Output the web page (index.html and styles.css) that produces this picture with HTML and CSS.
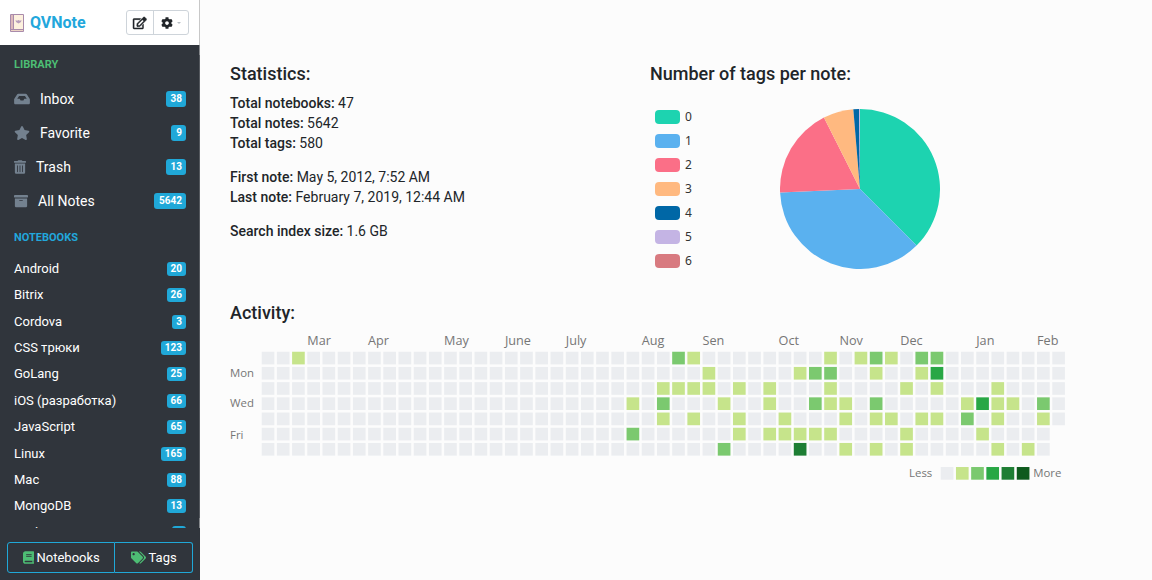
FILE: index.html
```html
<!DOCTYPE html>
<html lang="en">
<head>
<meta charset="utf-8">
<title>QVNote</title>
<link rel="stylesheet" href="styles.css">
</head>
<body>
<div class="app">
  <aside class="sidebar">
    <header class="brand-bar">
      <svg class="logo" viewBox="0 0 14 18" aria-hidden="true">
        <rect x="0" y="0" width="14" height="18" rx="1" fill="#a98bab"/>
        <rect x="4" y="1" width="9" height="14" fill="#fdf1de"/>
        <rect x="1" y="1" width="2" height="14" fill="#dcb9bb"/>
        <rect x="1" y="16" width="12" height="1" fill="#ecd3c4"/>
        <path d="M5.500 6l1.500.8L8.500 6l1.500.8L11.500 6 11 8 8.500 9.500 6 8z" fill="#b79dbb"/>
      </svg>
      <a class="brand" href="#">QVNote</a>
      <div class="tools">
        <button class="tool" type="button" aria-label="New note">
          <svg class="tool-icon tool-icon-edit" viewBox="0 0 576 512" aria-hidden="true"><path d="M402.300 344.900l32-32c5-5 13.700-1.500 13.700 5.700V464c0 26.500-21.500 48-48 48H48c-26.500 0-48-21.500-48-48V112c0-26.500 21.500-48 48-48h273.500c7.100 0 10.700 8.600 5.700 13.700l-32 32c-1.500 1.500-3.500 2.300-5.700 2.300H48v352h352V350.500c0-2.100.8-4.100 2.300-5.600zm156.600-201.800L296.300 405.700l-90.400 10c-26.200 2.900-48.500-19.200-45.600-45.600l10-90.400L432.900 17.100c22.900-22.900 59.900-22.900 82.700 0l43.200 43.200c22.900 22.900 22.900 60 .1 82.800zM460.100 174L402 115.900 216.200 301.800l-7.300 65.300 65.300-7.300L460.100 174z"/></svg>
        </button>
        <button class="tool tool-menu" type="button" aria-label="Settings">
          <svg class="tool-icon" viewBox="0 0 512 512" aria-hidden="true"><path d="M487.400 315.700l-42.600-24.600c4.300-23.200 4.300-47 0-70.200l42.600-24.600c4.900-2.800 7.100-8.600 5.500-14-11.100-35.600-30-67.800-54.700-94.600-3.800-4.100-10-5.100-14.800-2.300L380.800 110c-17.900-15.400-38.500-27.300-60.800-35.100V25.800c0-5.600-3.900-10.500-9.400-11.700-36.700-8.200-74.300-7.800-109.200 0-5.500 1.200-9.400 6.100-9.400 11.700V75c-22.200 7.900-42.800 19.800-60.800 35.100L88.700 85.500c-4.900-2.800-11-1.900-14.800 2.300-24.700 26.700-43.600 58.900-54.700 94.600-1.700 5.400.6 11.200 5.500 14L67.300 221c-4.300 23.200-4.300 47 0 70.200l-42.600 24.600c-4.900 2.800-7.100 8.600-5.500 14 11.100 35.600 30 67.800 54.700 94.600 3.800 4.100 10 5.100 14.800 2.300l42.600-24.600c17.900 15.400 38.500 27.300 60.800 35.100v49.200c0 5.600 3.900 10.500 9.400 11.700 36.700 8.200 74.300 7.800 109.200 0 5.500-1.200 9.400-6.100 9.400-11.700v-49.200c22.200-7.900 42.800-19.800 60.800-35.100l42.600 24.600c4.900 2.800 11 1.900 14.800-2.300 24.700-26.700 43.600-58.900 54.700-94.600 1.500-5.500-.7-11.300-5.600-14.100zM256 336c-44.100 0-80-35.900-80-80s35.900-80 80-80 80 35.900 80 80-35.900 80-80 80z"/></svg>
          <span class="caret"></span>
        </button>
      </div>
    </header>

    <nav class="nav">
      <h2 class="nav-title nav-title-library">Library</h2>
      <ul class="library">
        <li><a class="library-link" href="#"><svg class="icon-16" viewBox="0 0 576 512" aria-hidden="true"><path d="M567.900 243.900L462.400 85.400A48 48 0 0 0 422.500 64H153.500a48 48 0 0 0-39.900 21.400L8.100 243.900A48 48 0 0 0 0 270.500V400c0 26.500 21.500 48 48 48h480c26.500 0 48-21.500 48-48V270.500a48 48 0 0 0-8.100-26.600zM180 150h216l66 98H372l-32 60H236l-32-60H114z"/></svg><span class="label">Inbox</span><span class="badge">38</span></a></li>
        <li><a class="library-link" href="#"><svg class="icon-16" viewBox="0 0 576 512" aria-hidden="true"><path d="M259.300 17.800L194 150.200 47.900 171.500c-26.200 3.800-36.700 36.100-17.700 54.600l105.700 103-25 145.500c-4.500 26.300 23.200 46 46.400 33.700L288 439.600l130.700 68.700c23.200 12.200 50.900-7.400 46.400-33.700l-25-145.500 105.700-103c19-18.500 8.500-50.800-17.700-54.600L382 150.200 316.700 17.800c-11.700-23.600-45.600-23.900-57.400 0z"/></svg><span class="label">Favorite</span><span class="badge">9</span></a></li>
        <li><a class="library-link" href="#"><svg class="icon-12" viewBox="0 0 448 512" aria-hidden="true"><path d="M32 464a48 48 0 0 0 48 48h288a48 48 0 0 0 48-48V128H32zm272-256a16 16 0 0 1 32 0v224a16 16 0 0 1-32 0zm-96 0a16 16 0 0 1 32 0v224a16 16 0 0 1-32 0zm-96 0a16 16 0 0 1 32 0v224a16 16 0 0 1-32 0zM432 32H312l-9.400-18.700A24 24 0 0 0 281.100 0H166.800a24 24 0 0 0-21.400 13.300L136 32H16A16 16 0 0 0 0 48v32a16 16 0 0 0 16 16h416a16 16 0 0 0 16-16V48a16 16 0 0 0-16-16z"/></svg><span class="label">Trash</span><span class="badge">13</span></a></li>
        <li><a class="library-link" href="#"><svg class="icon-14" viewBox="0 0 512 512" aria-hidden="true"><path d="M32 448c0 17.700 14.300 32 32 32h384c17.700 0 32-14.300 32-32V160H32zm160-212c0-6.600 5.400-12 12-12h104c6.600 0 12 5.400 12 12v8c0 6.600-5.400 12-12 12H204c-6.600 0-12-5.400-12-12zM480 32H32C14.300 32 0 46.300 0 64v48c0 8.800 7.200 16 16 16h480c8.800 0 16-7.200 16-16V64c0-17.700-14.300-32-32-32z"/></svg><span class="label">All Notes</span><span class="badge">5642</span></a></li>
      </ul>

      <h2 class="nav-title">Notebooks</h2>
      <ul class="notebooks">
        <li><a class="notebook-link" href="#"><span>Android</span><span class="badge badge-small">20</span></a></li>
        <li><a class="notebook-link" href="#"><span>Bitrix</span><span class="badge badge-small">26</span></a></li>
        <li><a class="notebook-link" href="#"><span>Cordova</span><span class="badge badge-small">3</span></a></li>
        <li><a class="notebook-link" href="#"><span>CSS трюки</span><span class="badge badge-small">123</span></a></li>
        <li><a class="notebook-link" href="#"><span>GoLang</span><span class="badge badge-small">25</span></a></li>
        <li><a class="notebook-link" href="#"><span>iOS (разработка)</span><span class="badge badge-small">66</span></a></li>
        <li><a class="notebook-link" href="#"><span>JavaScript</span><span class="badge badge-small">65</span></a></li>
        <li><a class="notebook-link" href="#"><span>Linux</span><span class="badge badge-small">165</span></a></li>
        <li><a class="notebook-link" href="#"><span>Mac</span><span class="badge badge-small">88</span></a></li>
        <li><a class="notebook-link" href="#"><span>MongoDB</span><span class="badge badge-small">13</span></a></li>
        <li><a class="notebook-link" href="#"><span>Node.js</span><span class="badge badge-small">8</span></a></li>
      </ul>
    </nav>

    <footer class="switcher">
      <button class="switch switch-wide" type="button"><svg class="icon-book" viewBox="0 0 448 512" aria-hidden="true"><path d="M448 360V24c0-13.300-10.700-24-24-24H96C43 0 0 43 0 96v320c0 53 43 96 96 96h328c13.300 0 24-10.700 24-24v-16c0-7.500-3.500-14.300-8.900-18.700-4.200-15.400-4.200-59.300 0-74.700 5.400-4.300 8.900-11.100 8.900-18.600zM128 134c0-3.300 2.700-6 6-6h212c3.300 0 6 2.700 6 6v20c0 3.300-2.700 6-6 6H134c-3.300 0-6-2.700-6-6v-20zm0 64c0-3.300 2.700-6 6-6h212c3.300 0 6 2.700 6 6v20c0 3.300-2.700 6-6 6H134c-3.300 0-6-2.700-6-6v-20zm253.400 250H96c-17.700 0-32-14.300-32-32 0-17.600 14.400-32 32-32h285.400c-1.900 17.100-1.900 46.900 0 64z"/></svg>Notebooks</button>
      <button class="switch" type="button"><svg class="icon-tags" viewBox="0 0 640 512" aria-hidden="true"><path d="M497.900 225.900L286.100 14.100A48 48 0 0 0 252.100 0H48C21.500 0 0 21.500 0 48v204.100a48 48 0 0 0 14.100 33.900l211.800 211.900c18.700 18.700 49.100 18.700 67.900 0l204.100-204.100c18.800-18.800 18.800-49.200 0-67.900zM112 160c-26.500 0-48-21.500-48-48s21.500-48 48-48 48 21.500 48 48-21.500 48-48 48zm513.900 133.800L421.800 497.900c-18.700 18.700-49.100 18.700-67.900 0l-.3-.3 174.900-174.900c36-36 36-94.600 0-130.600L336.400 0h43.700a48 48 0 0 1 33.900 14.100l211.900 211.800c18.700 18.700 18.700 49.100 0 67.900z"/></svg>Tags</button>
    </footer>
  </aside>

  <main class="content">
    <div class="overview">
      <section>
        <h1 class="heading">Statistics:</h1>
        <p class="stats"><strong>Total notebooks:</strong> 47<br><strong>Total notes:</strong> 5642<br><strong>Total tags:</strong> 580</p>
        <p class="stats"><strong>First note:</strong> May 5, 2012, 7:52 AM<br><strong>Last note:</strong> February 7, 2019, 12:44 AM</p>
        <p class="stats"><strong>Search index size:</strong> 1.6 GB</p>
      </section>
      <section>
        <h1 class="heading">Number of tags per note:</h1>
        <div class="pie-row">
          <ul class="legend">
            <li><span class="swatch swatch-0"></span>0</li>
            <li><span class="swatch swatch-1"></span>1</li>
            <li><span class="swatch swatch-2"></span>2</li>
            <li><span class="swatch swatch-3"></span>3</li>
            <li><span class="swatch swatch-4"></span>4</li>
            <li><span class="swatch swatch-5"></span>5</li>
            <li><span class="swatch swatch-6"></span>6</li>
          </ul>
          <svg class="pie" id="pie" viewBox="-80 -80 160 160" role="img" aria-label="Number of tags per note"></svg>
        </div>
      </section>
    </div>
    <section>
      <h1 class="heading heading-activity">Activity:</h1>
      <svg class="heatmap" id="heatmap" viewBox="0 0 663 122" role="img" aria-label="Activity"></svg>
    </section>
  </main>
</div>
<script src="charts.js"></script>
</body>
</html>
```

FILE: styles.css
```css
* {
  box-sizing: border-box;
}

body {
  margin: 0;
  background: #fcfcfc;
  color: #212529;
  font: 14px/20px Roboto, sans-serif;
}

ul {
  list-style: none;
  margin: 0;
  padding: 0;
}

a {
  color: inherit;
  text-decoration: none;
}

button {
  font: inherit;
  background: none;
  border: 0;
  padding: 0;
}

.app {
  display: flex;
  height: 100vh;
}

.sidebar {
  display: flex;
  flex-direction: column;
  flex: 0 0 200px;
  background: #30353c;
  color: #fff;
}

.brand-bar {
  display: flex;
  align-items: center;
  height: 45px;
  padding: 0 10px;
  background: #fff;
  border-right: 1px solid #c8c8c8;
}

.logo {
  width: 14px;
  height: 18px;
  margin-right: 6px;
}

.brand {
  color: #22a7dc;
  font-size: 16px;
  font-weight: 700;
}

.tools {
  display: flex;
  margin-left: auto;
  border: 1px solid #ced4da;
  border-radius: 3px;
}

.tool {
  display: flex;
  align-items: center;
  justify-content: center;
  width: 26px;
  height: 23px;
}

.tool-menu {
  width: 35px;
  gap: 4px;
  border-left: 1px solid #ced4da;
}

.tool-icon {
  height: 12px;
  fill: #212529;
}

.tool-icon-edit {
  overflow: visible;
  stroke: #212529;
  stroke-width: 20;
}

.caret {
  border: 2px solid transparent;
  border-top-color: #b8bec4;
  border-bottom: 0;
}

/* The right edge is a thin scroll track with lighter ends. */
.nav {
  flex: 1;
  min-height: 0;
  overflow: hidden;
  padding: 10px 15px 0 14px;
  background: linear-gradient(#85888c 10px, #55595f 10px calc(100% - 10px), #85888c calc(100% - 10px)) right / 1px 100% no-repeat;
}

.nav-title {
  margin: 0;
  color: #22a7dc;
  font-size: 11px;
  font-weight: 700;
  line-height: 20px;
  text-transform: uppercase;
}

.nav-title-library {
  color: #4dbd74;
}

.library {
  padding: 7px 0 10px;
}

.library-link,
.notebook-link {
  display: flex;
  align-items: center;
  margin-right: -1px;
}

.library-link {
  height: 34px;
}

.library-link svg {
  fill: #73818f;
}

.label {
  margin-left: 10px;
}

.icon-16 {
  width: 16px;
  height: 14px;
}

.icon-14 {
  width: 14px;
  height: 14px;
}

.icon-12 {
  width: 12px;
  height: 14px;
}

.badge {
  margin-left: auto;
  padding: 0 4px 0 5px;
  border-radius: 3px;
  background: #20a8d8;
  color: #fff;
  font-size: 10px;
  font-weight: 700;
  line-height: 16px;
}

.badge-small {
  padding: 0 4px;
  line-height: 14px;
}

.notebooks {
  display: grid;
  grid-auto-rows: 1fr;
  height: 298px;
  padding-top: 8px;
  font-size: 13px;
}

.notebook-link {
  height: 26px;
}

.switcher {
  display: flex;
  padding: 14px 7px 7px;
}

.switch {
  display: flex;
  align-items: center;
  justify-content: center;
  flex: 78;
  height: 31px;
  gap: 3px;
  border: 1px solid #20a8d8;
  border-left: 0;
  border-radius: 0 3px 3px 0;
  color: #fff;
  font-size: 13px;
}

.switch-wide {
  flex: 108;
  border-left: 1px solid #20a8d8;
  border-radius: 3px 0 0 3px;
}

.switch svg {
  fill: #4dbd74;
}

.icon-book {
  width: 11px;
  height: 13px;
}

.icon-tags {
  width: 15px;
  height: 13px;
}

.content {
  flex: 1;
  min-width: 0;
  padding: 62px 82px 20px 30px;
}

.overview {
  display: grid;
  grid-template-columns: 1fr 1fr;
  height: 239px;
}

.heading {
  margin: 0 0 8px;
  font-size: 18px;
  font-weight: 500;
  line-height: 23px;
}

.heading-activity {
  margin-bottom: 10px;
}

.stats {
  margin: 0 0 14px;
}

.stats strong {
  font-weight: 500;
}

.pie-row {
  display: flex;
  gap: 88px;
  padding: 12px 0 0 5px;
}

.legend {
  display: grid;
  grid-auto-rows: 24px;
  color: #333;
  font: 12px/24px "Noto Sans", sans-serif;
}

.legend li {
  display: flex;
  align-items: center;
  gap: 5px;
}

.swatch {
  width: 25px;
  height: 14px;
  border-radius: 4px;
}

.swatch-0 { background: #1dd3b0; }
.swatch-1 { background: #5ab1ef; }
.swatch-2 { background: #fb6f87; }
.swatch-3 { background: #ffb980; }
.swatch-4 { background: #0067a6; }
.swatch-5 { background: #c4b4e4; }
.swatch-6 { background: #d87a80; }

.pie {
  width: 160px;
  height: 160px;
  margin-top: 4px;
}

.heatmap {
  display: block;
  width: 100%;
  overflow: visible;
  font-family: "Open Sans", "Noto Sans", sans-serif;
  fill: #767676;
}

.heatmap-month {
  font-size: 10px;
}

.heatmap-note {
  font-size: 9px;
}
```

FILE: charts.js
```
const NS = "http://www.w3.org/2000/svg";

function add(parent, tag, attrs, text) {
  const el = document.createElementNS(NS, tag);
  for (const key in attrs) el.setAttribute(key, attrs[key]);
  if (text) el.textContent = text;
  parent.appendChild(el);
}

const slices = [
  [0, 135, "#1dd3b0"],
  [135, 267.5, "#5ab1ef"],
  [267.5, 333.2, "#fb6f87"],
  [333.2, 355.2, "#ffb980"],
  [355.2, 359.4, "#0067a6"],
  [359.4, 360, "#c4b4e4"]
];
const pie = document.getElementById("pie");
const point = deg => {
  const a = deg * Math.PI / 180;
  return `${80 * Math.sin(a)} ${-80 * Math.cos(a)}`;
};
for (const [from, to, fill] of slices) {
  add(pie, "path", { d: `M0 0L${point(from)}A80 80 0 0 1 ${point(to)}Z`, fill });
}

const colors = ["#ebedf0", "#c6e48b", "#7bc96f", "#28a745", "#1e7e34", "#0e5a1d"];
const STEP = 12;
const LEFT = 25;
const TOP = 14;
const days = [
  { 2: 1, 27: 2, 28: 1, 37: 1, 39: 1, 40: 2, 41: 1, 43: 2, 44: 2 },
  { 29: 1, 35: 1, 36: 2, 37: 2, 40: 1, 43: 1, 44: 3 },
  { 26: 1, 27: 1, 28: 1, 29: 1, 31: 1, 33: 1, 37: 1, 42: 1, 44: 1, 48: 1 },
  { 24: 1, 26: 2, 30: 1, 33: 1, 36: 2, 37: 1, 38: 1, 40: 2, 46: 1, 47: 3, 48: 1, 49: 1, 51: 2 },
  { 26: 1, 28: 1, 31: 1, 34: 1, 38: 1, 40: 1, 41: 1, 43: 1, 44: 1, 46: 2, 48: 1, 51: 1 },
  { 24: 2, 31: 1, 33: 1, 34: 1, 35: 1, 36: 1, 37: 1, 42: 1, 47: 1 },
  { 30: 2, 35: 4, 38: 1, 40: 1, 42: 1, 48: 1, 50: 1 }
];
const months = [["Mar", 3], ["Apr", 7], ["May", 12], ["June", 16], ["July", 20], ["Aug", 25],
  ["Sen", 29], ["Oct", 34], ["Nov", 38], ["Dec", 42], ["Jan", 47], ["Feb", 51]];

const map = document.getElementById("heatmap");
const square = (x, y, level) =>
  add(map, "rect", { x, y, width: 10, height: 10, fill: colors[level] });

for (const [name, week] of months) {
  add(map, "text", { class: "heatmap-month", x: LEFT + week * STEP, y: 9 }, name);
}
[["Mon", 34], ["Wed", 58], ["Fri", 83]].forEach(([name, y]) =>
  add(map, "text", { class: "heatmap-note", x: 0, y }, name));
days.forEach((row, day) => {
  const weeks = day < 5 ? 53 : 52;
  for (let week = 0; week < weeks; week++) {
    square(LEFT + week * STEP, TOP + day * STEP, row[week] || 0);
  }
});

add(map, "text", { class: "heatmap-note", x: 536, y: 113 }, "Less");
colors.forEach((color, level) => square(561 + level * STEP, 105, level));
add(map, "text", { class: "heatmap-note", x: 634, y: 113 }, "More");
```
